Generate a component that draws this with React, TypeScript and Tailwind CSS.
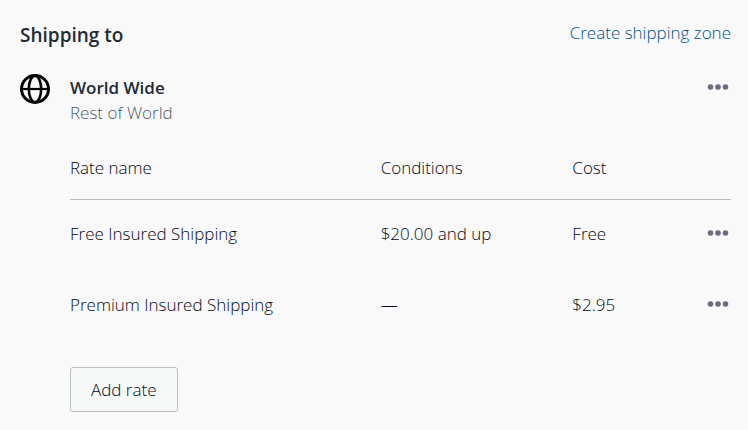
import React from "react";

interface Rate {
  id: string;
  name: string;
  conditions: string;
  cost: string;
}

const RATES: Rate[] = [
  { id: "free", name: "Free Insured Shipping", conditions: "$20.00 and up", cost: "Free" },
  { id: "premium", name: "Premium Insured Shipping", conditions: "—", cost: "$2.95" }
];

function GlobeIcon() {
  return (
    <svg viewBox="0 0 30 30" className="w-[30px] h-[30px] shrink-0" fill="none" stroke="#000" strokeWidth="3" aria-hidden="true">
      <circle cx="15" cy="15" r="13.5" />
      <ellipse cx="15" cy="15" rx="6.2" ry="13.3" strokeWidth="2.6" />
      <path d="M2 15h26" strokeWidth="2.2" />
    </svg>
  );
}

function MoreButton({ label }: { label: string }) {
  return (
    <button type="button" aria-label={label} className="flex items-center h-6 ml-auto pr-[2px] text-[#6b6a80] cursor-pointer">
      <svg viewBox="0 0 22 6" className="w-[22px] h-[6px]" fill="currentColor" aria-hidden="true">
        <circle cx="3.5" cy="3" r="2.8" />
        <circle cx="11" cy="3" r="2.8" />
        <circle cx="18.5" cy="3" r="2.8" />
      </svg>
    </button>
  );
}

export default function App() {
  return (
    <main className="min-h-screen bg-[#f9f9f9] pl-5 pr-[17px] pt-5 pb-[18px] font-['Segoe_UI','Open_Sans',sans-serif] font-light text-[17px] leading-[25px] text-[#040a14]">
      <header className="flex items-start justify-between">
        <h2 className="text-[19px] leading-[30px] font-semibold text-[#212b36]">Shipping to</h2>
        <a href="#create-zone" className="text-[#00528f]">Create shipping zone</a>
      </header>

      <section className="flex gap-5 mt-6">
        <GlobeIcon />
        <div className="flex-1 min-w-0 pt-px">
          <div className="flex items-start justify-between">
            <div>
              <h3 className="font-semibold text-[#212b36]">World Wide</h3>
              <p className="text-[#4f5b67]">Rest of World</p>
            </div>
            <MoreButton label="World Wide actions" />
          </div>

          {/* Rates of the zone */}
          <table className="w-full table-fixed mt-3 text-left">
            <thead>
              <tr className="h-[62px] border-b border-[#b9bcc0]">
                <th className="w-[47%] font-light">Rate name</th>
                <th className="w-[29%] font-light">Conditions</th>
                <th className="font-light">Cost</th>
                <td className="w-12" />
              </tr>
            </thead>
            <tbody>
              {RATES.map((rate) => (
                <tr key={rate.id} className="h-[71px]">
                  <td className="pb-0.5">{rate.name}</td>
                  <td className="pb-0.5">{rate.conditions}</td>
                  <td className="pb-0.5">{rate.cost}</td>
                  <td className="pb-1">
                    <MoreButton label={`${rate.name} actions`} />
                  </td>
                </tr>
              ))}
            </tbody>
          </table>

          <button
            type="button"
            className="mt-[26px] h-[45px] px-5 border border-[#b9c1c6] rounded-[3px] bg-[#f7f9f9] cursor-pointer"
          >
            Add rate
          </button>
        </div>
      </section>
    </main>
  );
}
